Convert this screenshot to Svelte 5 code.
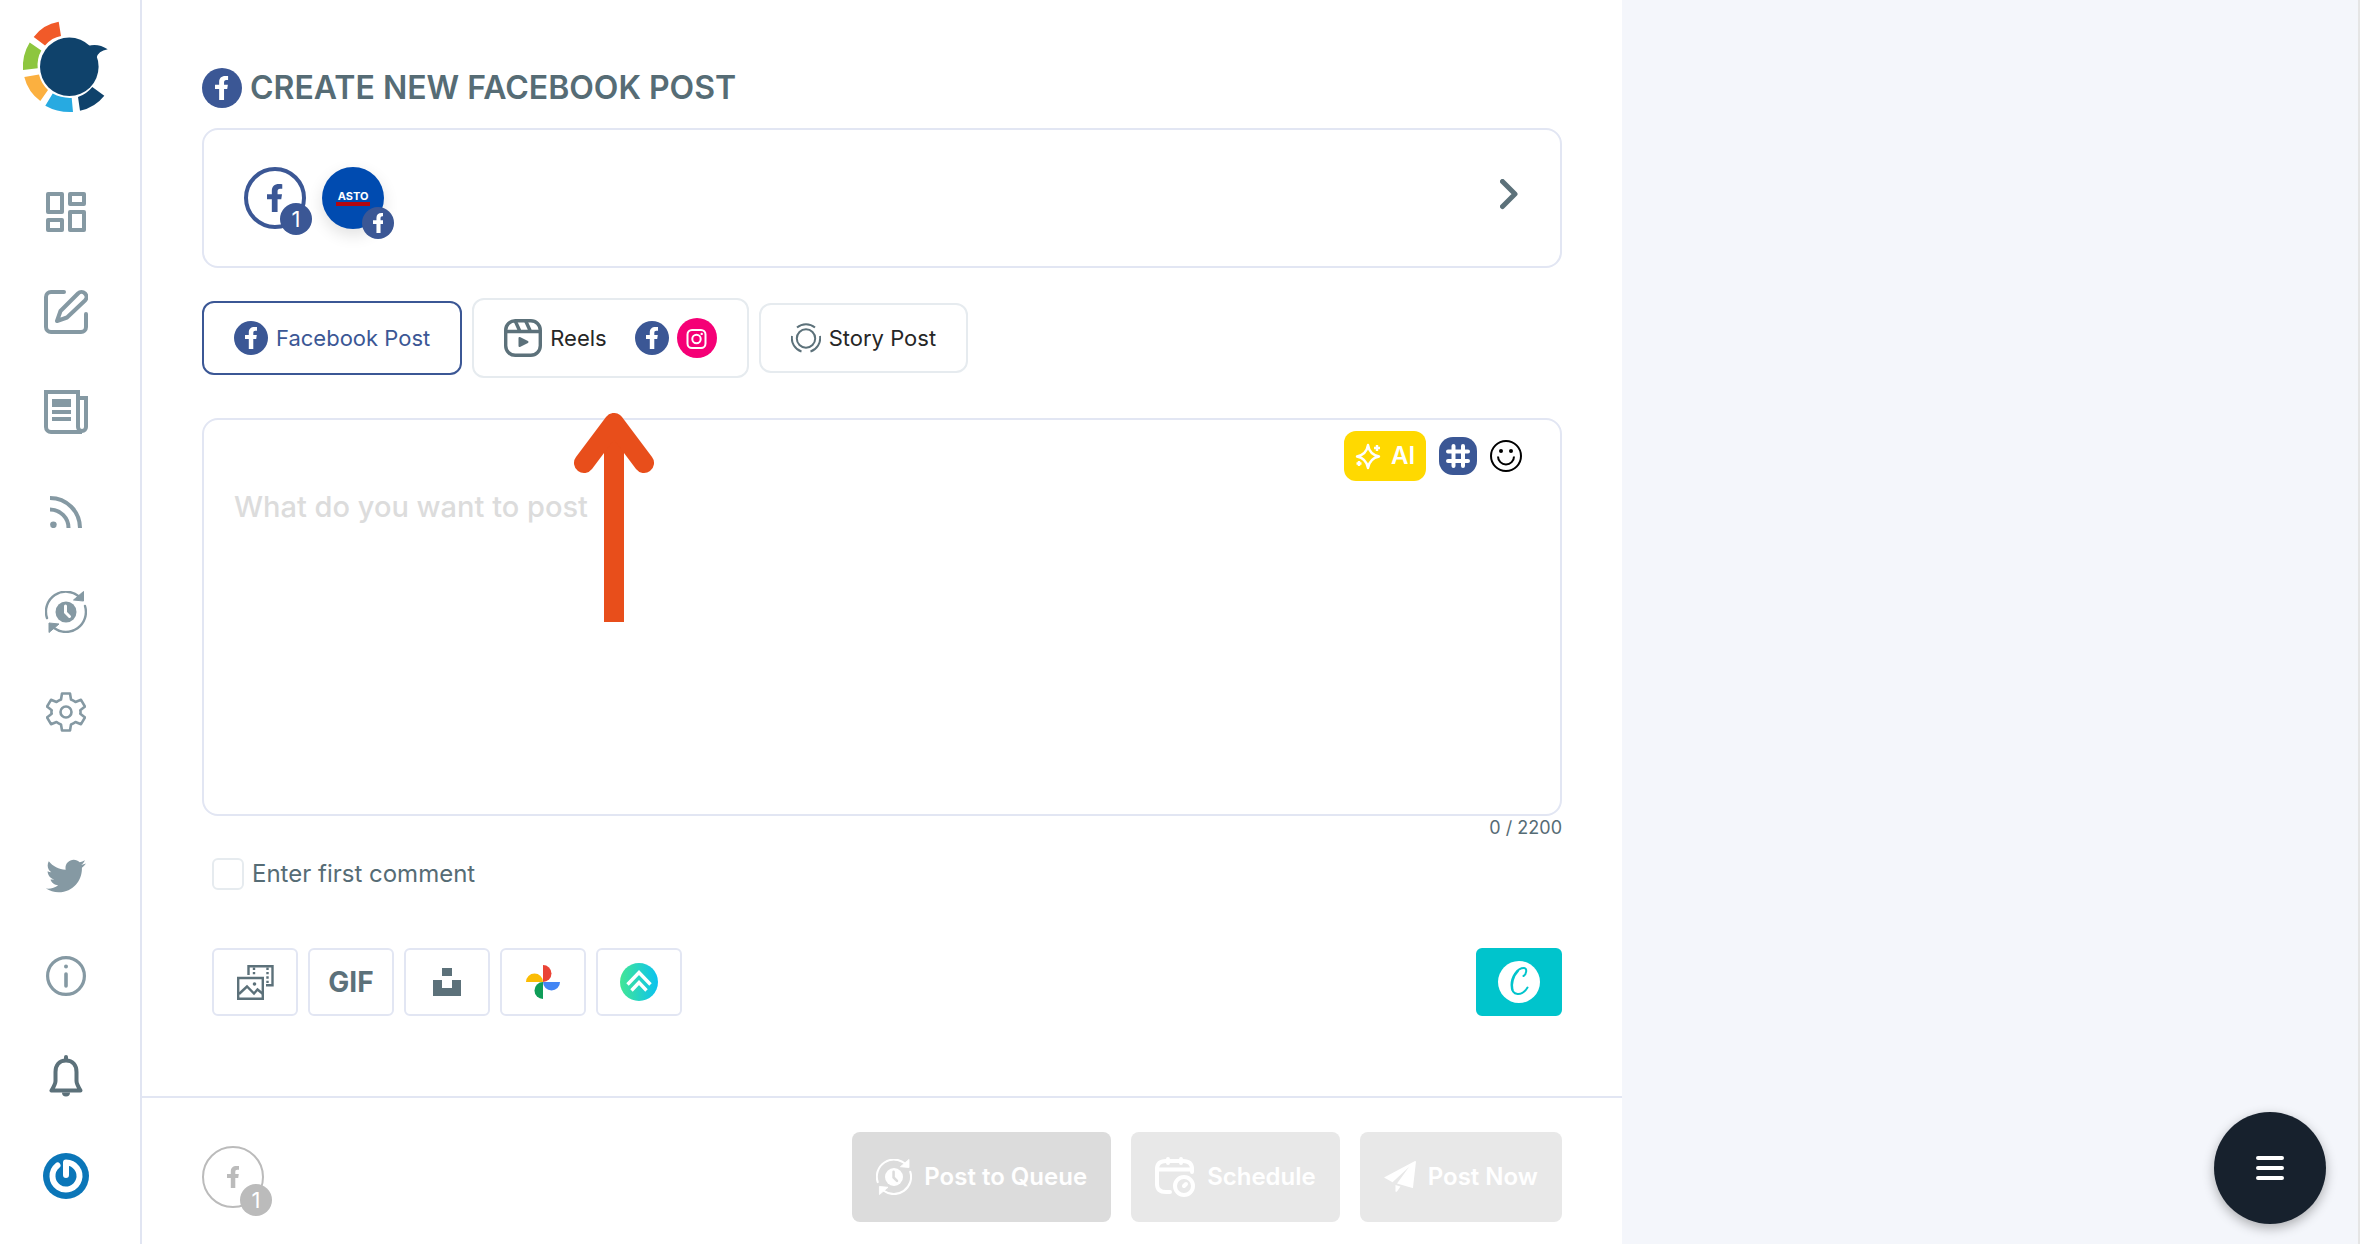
<script lang="ts">
    let post = $state('');
    let firstComment = $state(false);
    let activeTab = $state('post');

    const maxLength = 2200;
</script>

{#snippet fbGlyph(height: number)}
    <svg class="fb-glyph" {height} viewBox="0 0 12 22" fill="currentColor" aria-hidden="true">
        <path d="M8.300 22V12h2.900l.6-3.900H8.300V5.900c0-1.400.6-2.200 2-2.200H12V.1C11.400 0 10.400 0 9.500 0 5.800 0 3.800 2 3.800 5.400v2.700H0V12h3.800v10z" />
    </svg>
{/snippet}

{#snippet queueIcon(size: number)}
    <svg width={size} height={size} viewBox="0 0 42 42" fill="none" aria-hidden="true">
        <path d="M2 27A20 20 0 0 1 34 5.500M40 15A20 20 0 0 1 9 37" stroke="currentColor" stroke-width="2.4" stroke-linecap="round" />
        <path d="M38.500.500v9.500l-10-1zM4 41.500V32l10 1z" fill="currentColor" stroke="currentColor" stroke-linejoin="round" />
        <circle cx="21" cy="21" r="10.500" fill="currentColor" />
        <path class="hand" d="M20.500 15v6.500l4 4" stroke-width="3" stroke-linecap="round" />
    </svg>
{/snippet}

<div class="layout">
    <aside class="sidebar">
        <a class="logo" href="#home" aria-label="Home">
            <svg width="90" height="94" viewBox="20 20 90 94">
                <path d="M58.700 21.800 61 36q-9 1.500-16 9.400L33.700 37Q43 24.500 58.700 21.800z" fill="#f15a29" />
                <path d="m29.700 42.500 11.600 7.900q-4.500 8-3.600 17.800L23 70q-1-15 6.700-27.500z" fill="#8dc63f" />
                <path d="M24.300 77 39 74.600Q41 83.500 48 90l-7.700 11Q28 92 24.300 77z" fill="#fbb040" />
                <path d="m45.300 105.700 7.400-12.100q9 4.800 19 4.300L73 112q-15 .8-27.700-6.300z" fill="#27aae1" />
                <path d="M78 97q8.500-2.800 14.300-10l12 8.700Q95 107.500 80 110.700z" fill="#0f426b" />
                <circle cx="69.300" cy="66.700" r="29.300" fill="#0f426b" />
                <path d="M88 46q10-3 19.700 3.300Q98 51 96.500 58z" fill="#0f426b" />
            </svg>
        </a>

        <nav class="nav">
            <a href="#dashboard" aria-label="Dashboard">
                <svg width="40" height="40" viewBox="0 0 40 40" fill="none" stroke="currentColor" stroke-width="4" stroke-linejoin="round">
                    <path d="M2 2h14v18H2zM24 2h14v10H24zM2 28h14v10H2zM24 20h14v18H24z" />
                </svg>
            </a>
            <a href="#publish" aria-label="Publish">
                <svg width="44" height="44" viewBox="0 0 44 44" fill="none" stroke="currentColor" stroke-width="4" stroke-linecap="round" stroke-linejoin="round">
                    <path d="M20 2H7a5 5 0 0 0-5 5v30a5 5 0 0 0 5 5h30a5 5 0 0 0 5-5V24" />
                    <path d="M34 3.500a4.800 4.800 0 0 1 7 7L23 27.500l-10 3.500 3.500-10z" />
                </svg>
            </a>
            <a href="#articles" aria-label="Articles">
                <svg width="44" height="44" viewBox="0 0 44 44" fill="none" stroke="currentColor" stroke-width="4">
                    <path d="M34 42H7a5 5 0 0 1-5-5V2h32v35a4 4 0 0 0 8 0V8h-8M32 42h6" />
                    <path d="M8 13h19" stroke-width="8" />
                    <path d="M8 22h19M8 29h19" />
                </svg>
            </a>
            <a href="#feeds" aria-label="RSS feeds">
                <svg width="32" height="32" viewBox="0 0 32 32" fill="none" stroke="currentColor" stroke-width="4">
                    <path d="M0 2a30 30 0 0 1 30 30M0 13.500A18.500 18.500 0 0 1 18.500 32" />
                    <circle cx="3.400" cy="28.800" r="3.300" fill="currentColor" stroke="none" />
                </svg>
            </a>
            <a href="#queue" aria-label="Queue">{@render queueIcon(42)}</a>
            <a href="#settings" aria-label="Settings">
                <svg width="40" height="40" viewBox="0 0 40 40" fill="none" stroke="currentColor" stroke-width="2.6" stroke-linejoin="round">
                    <path d="M16 1.500h8l1 6q2.500.9 4.500 2.500l5.500-2.200 4 6.800-4.700 3.700q.5 2.200 0 3.400l4.700 3.700-4 6.800-5.500-2.200q-2 1.600-4.500 2.500l-1 6h-8l-1-6q-2.500-.9-4.500-2.500L5 32.200l-4-6.800 4.700-3.700q-.5-1.700 0-3.400L1 14.600l4-6.800 5.500 2.200q2-1.600 4.500-2.500z" />
                    <circle cx="20" cy="20" r="5.500" />
                </svg>
            </a>
        </nav>

        <nav class="nav nav-bottom">
            <a href="#twitter" aria-label="Twitter">
                <svg width="40" height="40" viewBox="0 0 512 512" fill="currentColor">
                    <path d="M459.370 151.716c.325 4.548.325 9.097.325 13.645 0 138.720-105.583 298.558-298.558 298.558-59.452 0-114.680-17.219-161.137-47.106 8.447.974 16.568 1.299 25.340 1.299 49.055 0 94.213-16.568 130.274-44.832-46.132-.975-84.792-31.188-98.112-72.772 6.498.974 12.995 1.624 19.818 1.624 9.421 0 18.843-1.300 27.614-3.573-48.081-9.747-84.143-51.980-84.143-102.985v-1.299c13.969 7.797 30.214 12.670 47.431 13.319-28.264-18.843-46.781-51.005-46.781-87.391 0-19.492 5.197-37.360 14.294-52.954 51.655 63.675 129.300 105.258 216.365 109.807-1.624-7.797-2.599-15.918-2.599-24.040 0-57.828 46.782-104.934 104.934-104.934 30.213 0 57.502 12.670 76.670 33.137 23.715-4.548 46.456-13.320 66.599-25.340-7.798 24.366-24.366 44.833-46.132 57.827 21.117-2.273 41.584-8.122 60.426-16.243-14.292 20.791-32.161 39.308-52.628 54.253z" />
                </svg>
            </a>
            <a href="#info" aria-label="Info">
                <svg width="40" height="40" viewBox="0 0 40 40" fill="none" stroke="currentColor">
                    <circle cx="20" cy="20" r="18.400" stroke-width="3.200" />
                    <path d="M20 18v12" stroke-width="3.600" stroke-linecap="round" />
                    <circle cx="20" cy="10.500" r="2" fill="currentColor" stroke="none" />
                </svg>
            </a>
            <a class="dark" href="#notifications" aria-label="Notifications">
                <svg width="34" height="42" viewBox="0 0 34 42" fill="none" stroke="currentColor" stroke-width="4" stroke-linejoin="round">
                    <path d="M17 5.500C10 5.500 6.500 10.500 6.500 17v9q0 3-4 9.500h29q-4-6.500-4-9.500v-9c0-6.500-3.500-11.500-10.500-11.500z" />
                    <path d="M17 2v3" stroke-linecap="round" />
                    <path d="M13 37.500h8a4 4 0 0 1-8 0z" fill="currentColor" stroke="none" />
                </svg>
            </a>
            <a href="#account" aria-label="Account">
                <svg width="46" height="46" viewBox="0 0 46 46" fill="none">
                    <circle cx="23" cy="23" r="23" fill="#0b76b8" />
                    <path d="M14.500 12.500A13.500 13.500 0 1 0 23 9.500V22" stroke="#fff" stroke-width="6" stroke-linecap="round" stroke-linejoin="round" />
                </svg>
            </a>
        </nav>
    </aside>

    <main class="main">
        <div class="content">
            <h1 class="title">
                <span class="fb-circle fb-large">{@render fbGlyph(24)}</span>
                CREATE NEW FACEBOOK POST
            </h1>

            <button class="accounts" aria-label="Select accounts">
                <span class="account-list">
                    <span class="account account-total">
                        {@render fbGlyph(28)}
                        <span class="badge">1</span>
                    </span>
                    <span class="account account-page">
                        <span class="page-name">ASTO</span>
                        <span class="badge badge-low">{@render fbGlyph(20)}</span>
                    </span>
                </span>
                <svg width="18" height="38" viewBox="0 0 18 38" fill="none" stroke="#5c717a" stroke-width="5" stroke-linecap="round" stroke-linejoin="round">
                    <path d="m2.500 2.500 12.500 12.500L2.500 27.500" />
                </svg>
            </button>

            <div class="tabs">
                <button class="tab tab-post" class:active={activeTab === 'post'} onclick={() => activeTab = 'post'}>
                    <span class="fb-circle">{@render fbGlyph(22)}</span>
                    Facebook Post
                </button>
                <button class="tab tab-reels" class:active={activeTab === 'reels'} onclick={() => activeTab = 'reels'}>
                    <svg width="38" height="38" viewBox="0 0 38 38" fill="none" stroke="#5c717a" stroke-width="3.4">
                        <rect x="1.700" y="1.700" width="34.600" height="34.600" rx="9.500" />
                        <path d="M1.700 12.500h34.600M11 1.500l5 11M21.500 1.500l5 11" />
                        <path d="M15.500 19v8l8-4z" fill="#5c717a" stroke-width="2" stroke-linejoin="round" />
                    </svg>
                    Reels
                    <span class="networks">
                        <span class="fb-circle">{@render fbGlyph(22)}</span>
                        <svg width="40" height="40" viewBox="0 0 40 40" fill="none" stroke="#fff" stroke-width="2">
                            <circle cx="20" cy="20" r="20" fill="#f50076" stroke="none" />
                            <rect x="10.500" y="12" width="18" height="18" rx="4.500" />
                            <circle cx="19.500" cy="21" r="4.200" />
                            <circle cx="24.700" cy="15.900" r="1.200" fill="#fff" stroke="none" />
                        </svg>
                    </span>
                </button>
                <button class="tab tab-story" class:active={activeTab === 'story'} onclick={() => activeTab = 'story'}>
                    <svg width="30" height="30" viewBox="0 0 30 30" fill="none" stroke="#5c717a" stroke-width="2">
                        <circle cx="15" cy="15.500" r="9.200" />
                        <path d="M6 4.600a14 14 0 0 1 18 0M29 13a14 14 0 0 1-9.500 15.500M1 13a14 14 0 0 0 9.500 15.500" />
                    </svg>
                    Story Post
                </button>
            </div>

            <div class="composer">
                <div class="composer-tools">
                    <button class="ai">
                        <svg width="26" height="27" viewBox="0 0 26 27" fill="none" stroke="#fff" stroke-width="2.400" stroke-linejoin="round">
                            <path d="M13 2q1.500 9.500 11 11.500-9.500 2-11 11.500-1.500-9.500-11-11.500 9.500-2 11-11.500z" />
                            <path d="M22 2v6M19 5h6M4 18v5M1.500 20.500h5" />
                        </svg>
                        AI
                    </button>
                    <button class="hashtag" aria-label="Hashtags">
                        <svg width="24" height="24" viewBox="0 0 24 24" fill="none" stroke="#fff" stroke-width="4" stroke-linecap="round">
                            <path d="M2 7.500h20M2 17h20M7.500 2v20M17 2v20" />
                        </svg>
                    </button>
                    <button class="emoji" aria-label="Emoji">
                        <svg width="32" height="32" viewBox="0 0 32 32" fill="none" stroke="#000" stroke-width="2">
                            <circle cx="16" cy="16" r="15" />
                            <path d="M8 16.500a8 8 0 0 0 16 0" />
                            <circle cx="11" cy="11" r="2" fill="#000" stroke="none" />
                            <circle cx="21" cy="11" r="2" fill="#000" stroke="none" />
                        </svg>
                    </button>
                </div>
                <textarea bind:value={post} maxlength={maxLength} placeholder="What do you want to post" aria-label="Post text"></textarea>
                <svg class="arrow" width="80" height="209" viewBox="0 0 80 209" fill="none" stroke="#e84e1b" stroke-width="20">
                    <path d="M40 209V12" />
                    <path d="m10 50 30-40 30 40" stroke-linecap="round" stroke-linejoin="round" />
                </svg>
            </div>
            <div class="counter">{post.length} / {maxLength}</div>

            <label class="comment">
                <input type="checkbox" bind:checked={firstComment} />
                Enter first comment
            </label>

            <div class="media">
                <button class="media-btn" aria-label="Upload media">
                    <svg width="37" height="35" viewBox="0 0 37 35" fill="none" stroke="#5c717a" stroke-width="2.400">
                        <path d="M1.200 13h24.600v20.800H1.200z" />
                        <path d="m2 29 8-7.500 7 7 3.500-4L26 29" />
                        <circle cx="17.500" cy="19" r="1.800" fill="#5c717a" stroke="none" />
                        <path d="M11.500 10V1.200h24v19H29" />
                        <path d="M17 2.500v8M30.500 2.500v17" stroke-dasharray="2.400 2" />
                    </svg>
                </button>
                <button class="media-btn gif">GIF</button>
                <button class="media-btn" aria-label="Unsplash">
                    <svg width="28" height="28" viewBox="0 0 28 28" fill="#5c717a">
                        <path d="M9 0h10v8H9zM0 12h9v8h10v-8h9v16H0z" />
                    </svg>
                </button>
                <button class="media-btn" aria-label="Google Photos">
                    <svg width="34" height="34" viewBox="0 0 34 34">
                        <path d="M17 0a8.500 8.500 0 0 1 0 17z" fill="#ea4335" />
                        <path d="M34 17a8.500 8.500 0 0 1-17 0z" fill="#4285f4" />
                        <path d="M17 34a8.500 8.500 0 0 1 0-17z" fill="#0f9d58" />
                        <path d="M0 17a8.500 8.500 0 0 1 17 0z" fill="#fbbc04" />
                    </svg>
                </button>
                <button class="media-btn" aria-label="Import">
                    <svg width="38" height="38" viewBox="0 0 38 38" fill="none" stroke="#fff" stroke-width="3.400">
                        <defs>
                            <linearGradient id="teal">
                                <stop offset="0" stop-color="#42e695" />
                                <stop offset="1" stop-color="#0bc2f0" />
                            </linearGradient>
                        </defs>
                        <circle cx="19" cy="19" r="19" fill="url(#teal)" stroke="none" />
                        <path d="M7.500 21.500 19 9.500l11.500 12M11.500 27.500l7.500-8 7.500 8" />
                    </svg>
                </button>
                <button class="media-btn canva" aria-label="Canva">
                    <svg width="42" height="42" viewBox="0 0 42 42" fill="none" stroke="#00c4cc" stroke-width="2" stroke-linecap="round">
                        <circle cx="21" cy="21" r="21" fill="#fff" stroke="none" />
                        <path d="M25.500 15c3-1.500 4-8 .5-8-7 0-12.500 9-12.500 17 0 12 11 11 16 2.500" />
                        <path d="M20 10c-5 5-7 13-5.500 19" />
                    </svg>
                </button>
            </div>
        </div>

        <footer class="footer">
            <span class="account account-muted">
                {@render fbGlyph(22)}
                <span class="badge badge-low">1</span>
            </span>
            <div class="actions">
                <button class="action queue" disabled>
                    {@render queueIcon(36)}
                    Post to Queue
                </button>
                <button class="action" disabled>
                    <svg width="40" height="40" viewBox="0 0 40 40" fill="none" stroke="#fff" stroke-width="4" stroke-linecap="round">
                        <path d="M15 35h-4c-6 0-9-3-9-8V12c0-5 3-8 9-8h17c6 0 9 3 9 8v3" />
                        <path d="M2 12.500h35M13 2v4M26 2v4" />
                        <circle cx="29" cy="29" r="9" />
                        <path d="m29 29 2-2" />
                    </svg>
                    Schedule
                </button>
                <button class="action" disabled>
                    <svg width="32" height="32" viewBox="0 0 32 32" fill="#fff">
                        <path d="M31 0 0 16.500l8.500 4.700L25 6 13 22.500 28.500 27q.5 0 .5-.5L32 .5Q31.700 0 31 0zM11.500 24l5 1.500-3.500 5q-1.500 1-1.500-.5z" />
                    </svg>
                    Post Now
                </button>
            </div>
        </footer>
    </main>

    <section class="preview" aria-label="Preview"></section>

    <button class="fab" aria-label="Menu">
        <svg width="28" height="24" viewBox="0 0 28 24" stroke="#fff" stroke-width="4" stroke-linecap="round">
            <path d="M2 2h24M2 12h24M2 22h24" />
        </svg>
    </button>
</div>

<style>
    :global(body) {
        margin: 0;
        background: #fff;
    }

    * {
        box-sizing: border-box;
    }

    .layout {
        display: grid;
        grid-template-columns: 142px minmax(0, 2fr) minmax(0, 1fr);
        min-height: 100vh;
        font-family: Inter, 'Liberation Sans', sans-serif;
        font-size: 22px;
        line-height: 28px;
        color: #566c75;
    }

    svg {
        display: block;
        flex-shrink: 0;
    }

    button {
        font: inherit;
        color: inherit;
        padding: 0;
        border: none;
        background: none;
        cursor: pointer;
    }

    .sidebar {
        display: flex;
        flex-direction: column;
        padding: 20px 0 26px;
        border-right: 2px solid #e1e5f2;
    }

    .logo {
        margin-left: 20px;
        margin-bottom: 48px;
    }

    .nav {
        display: flex;
        flex-direction: column;
        padding-right: 8px;
    }

    .nav a {
        display: flex;
        align-items: center;
        justify-content: center;
        height: 100px;
        color: #8599a3;
    }

    .nav a.dark {
        color: #5c717a;
    }

    .nav-bottom {
        margin-top: auto;
        margin-bottom: -8px;
    }

    .hand {
        stroke: #fff;
    }

    .main {
        display: flex;
        flex-direction: column;
    }

    .content {
        display: flex;
        flex-direction: column;
        padding: 68px 60px 80px;
    }

    .title {
        display: flex;
        align-items: center;
        gap: 8px;
        margin: 0 0 20px;
        font-size: 32px;
        line-height: 40px;
        font-weight: 600;
    }

    .fb-circle {
        display: flex;
        align-items: center;
        justify-content: center;
        flex-shrink: 0;
        width: 34px;
        height: 34px;
        border-radius: 50%;
        background: #3b5795;
        color: #fff;
    }

    .fb-large {
        width: 40px;
        height: 40px;
    }

    .accounts {
        display: flex;
        align-items: center;
        justify-content: space-between;
        height: 140px;
        padding: 0 42px 0 40px;
        border: 2px solid #e2e6f3;
        border-radius: 16px;
    }

    .account-list {
        display: flex;
        gap: 16px;
    }

    .account {
        position: relative;
        display: flex;
        align-items: center;
        justify-content: center;
        width: 62px;
        height: 62px;
        border-radius: 50%;
    }

    .account-total {
        border: 4px solid #3b5795;
        color: #3b5795;
    }

    .account-page {
        background: #004bb0;
        box-shadow: 0 6px 16px rgba(0, 0, 0, 0.12);
    }

    .page-name {
        padding: 0 2px;
        border-bottom: 4px solid #b3070f;
        color: #fff;
        font-size: 11px;
        line-height: 12px;
        font-weight: 700;
    }

    .badge {
        position: absolute;
        right: -10px;
        bottom: -6px;
        display: flex;
        align-items: center;
        justify-content: center;
        width: 32px;
        height: 32px;
        border-radius: 50%;
        background: #3b5795;
        color: #fff;
        font-size: 22px;
    }

    .badge-low {
        bottom: -10px;
    }

    .account-total .badge {
        bottom: -10px;
    }

    .account-muted {
        border: 2px solid #bbb;
        color: #bbb;
    }

    .account-muted .badge {
        background: #bbb;
    }

    .tabs {
        display: flex;
        align-items: center;
        gap: 10px;
        margin: 30px 0 40px;
    }

    .tab {
        display: flex;
        align-items: center;
        gap: 8px;
        height: 70px;
        padding: 0 30px;
        border: 2px solid #e6ebef;
        border-radius: 12px;
        color: #262626;
        white-space: nowrap;
    }

    .tab-post {
        height: 74px;
    }

    .tab-reels {
        height: 80px;
    }

    .tab.active {
        border-color: #3b5795;
        color: #3b5795;
    }

    .networks {
        display: flex;
        align-items: center;
        gap: 8px;
        margin-left: 20px;
    }

    .composer {
        position: relative;
        display: flex;
        flex-direction: column;
        padding-top: 11px;
        border: 2px solid #e2e6f3;
        border-radius: 16px;
    }

    .composer-tools {
        display: flex;
        align-items: center;
        justify-content: flex-end;
        gap: 13px;
        padding-right: 38px;
    }

    .ai {
        display: flex;
        align-items: center;
        justify-content: center;
        gap: 10px;
        width: 82px;
        height: 50px;
        border-radius: 12px;
        background: #ffd900;
        color: #fff;
        font-size: 24px;
        font-weight: 600;
    }

    .hashtag {
        display: flex;
        align-items: center;
        justify-content: center;
        width: 38px;
        height: 38px;
        border-radius: 14px;
        background: #3b5795;
    }

    textarea {
        height: 333px;
        padding: 8px 30px;
        border: none;
        outline: none;
        resize: none;
        background: none;
        font: inherit;
        font-size: 29px;
        font-weight: 500;
        line-height: 36px;
        color: #262626;
    }

    textarea::placeholder {
        color: #dcdcdc;
        opacity: 1;
    }

    .arrow {
        position: absolute;
        top: -7px;
        left: 370px;
        pointer-events: none;
    }

    .counter {
        font-size: 18px;
        line-height: 24px;
        text-align: right;
    }

    .comment {
        display: flex;
        align-items: center;
        align-self: flex-start;
        gap: 8px;
        margin: 18px 10px 58px;
        font-size: 24px;
        line-height: 32px;
    }

    .comment input {
        appearance: none;
        width: 32px;
        height: 32px;
        margin: 0;
        border: 2px solid #e6ebef;
        border-radius: 6px;
    }

    .comment input:checked {
        background: #3b5795;
    }

    .media {
        display: flex;
        gap: 10px;
        padding-left: 10px;
    }

    .media-btn {
        display: flex;
        align-items: center;
        justify-content: center;
        width: 86px;
        height: 68px;
        border: 2px solid #e2e6f3;
        border-radius: 6px;
    }

    .gif {
        font-size: 28px;
        font-weight: 700;
        color: #5c717a;
    }

    .canva {
        margin-left: auto;
        border-color: #00c4cc;
        background: #00c4cc;
    }

    .footer {
        display: flex;
        align-items: center;
        justify-content: space-between;
        margin-top: auto;
        padding: 34px 60px 22px;
        border-top: 2px solid #e2e6f3;
    }

    .actions {
        display: flex;
        gap: 20px;
    }

    .action {
        display: flex;
        align-items: center;
        gap: 12px;
        height: 90px;
        padding: 0 24px;
        border-radius: 8px;
        background: #e8e8e8;
        color: #fff;
        font-size: 24px;
        font-weight: 600;
        white-space: nowrap;
        cursor: default;
    }

    .queue {
        background: #dcdcdc;
    }

    .queue .hand {
        stroke: #dcdcdc;
    }

    .preview {
        margin-right: 2px;
        border-right: 2px solid #e5e5e5;
        background: #f4f6fb;
    }

    .fab {
        position: fixed;
        right: 36px;
        bottom: 20px;
        display: flex;
        align-items: center;
        justify-content: center;
        width: 112px;
        height: 112px;
        border-radius: 50%;
        background: #17212d;
        box-shadow: 0 4px 12px rgba(0, 0, 0, 0.3);
    }
</style>
